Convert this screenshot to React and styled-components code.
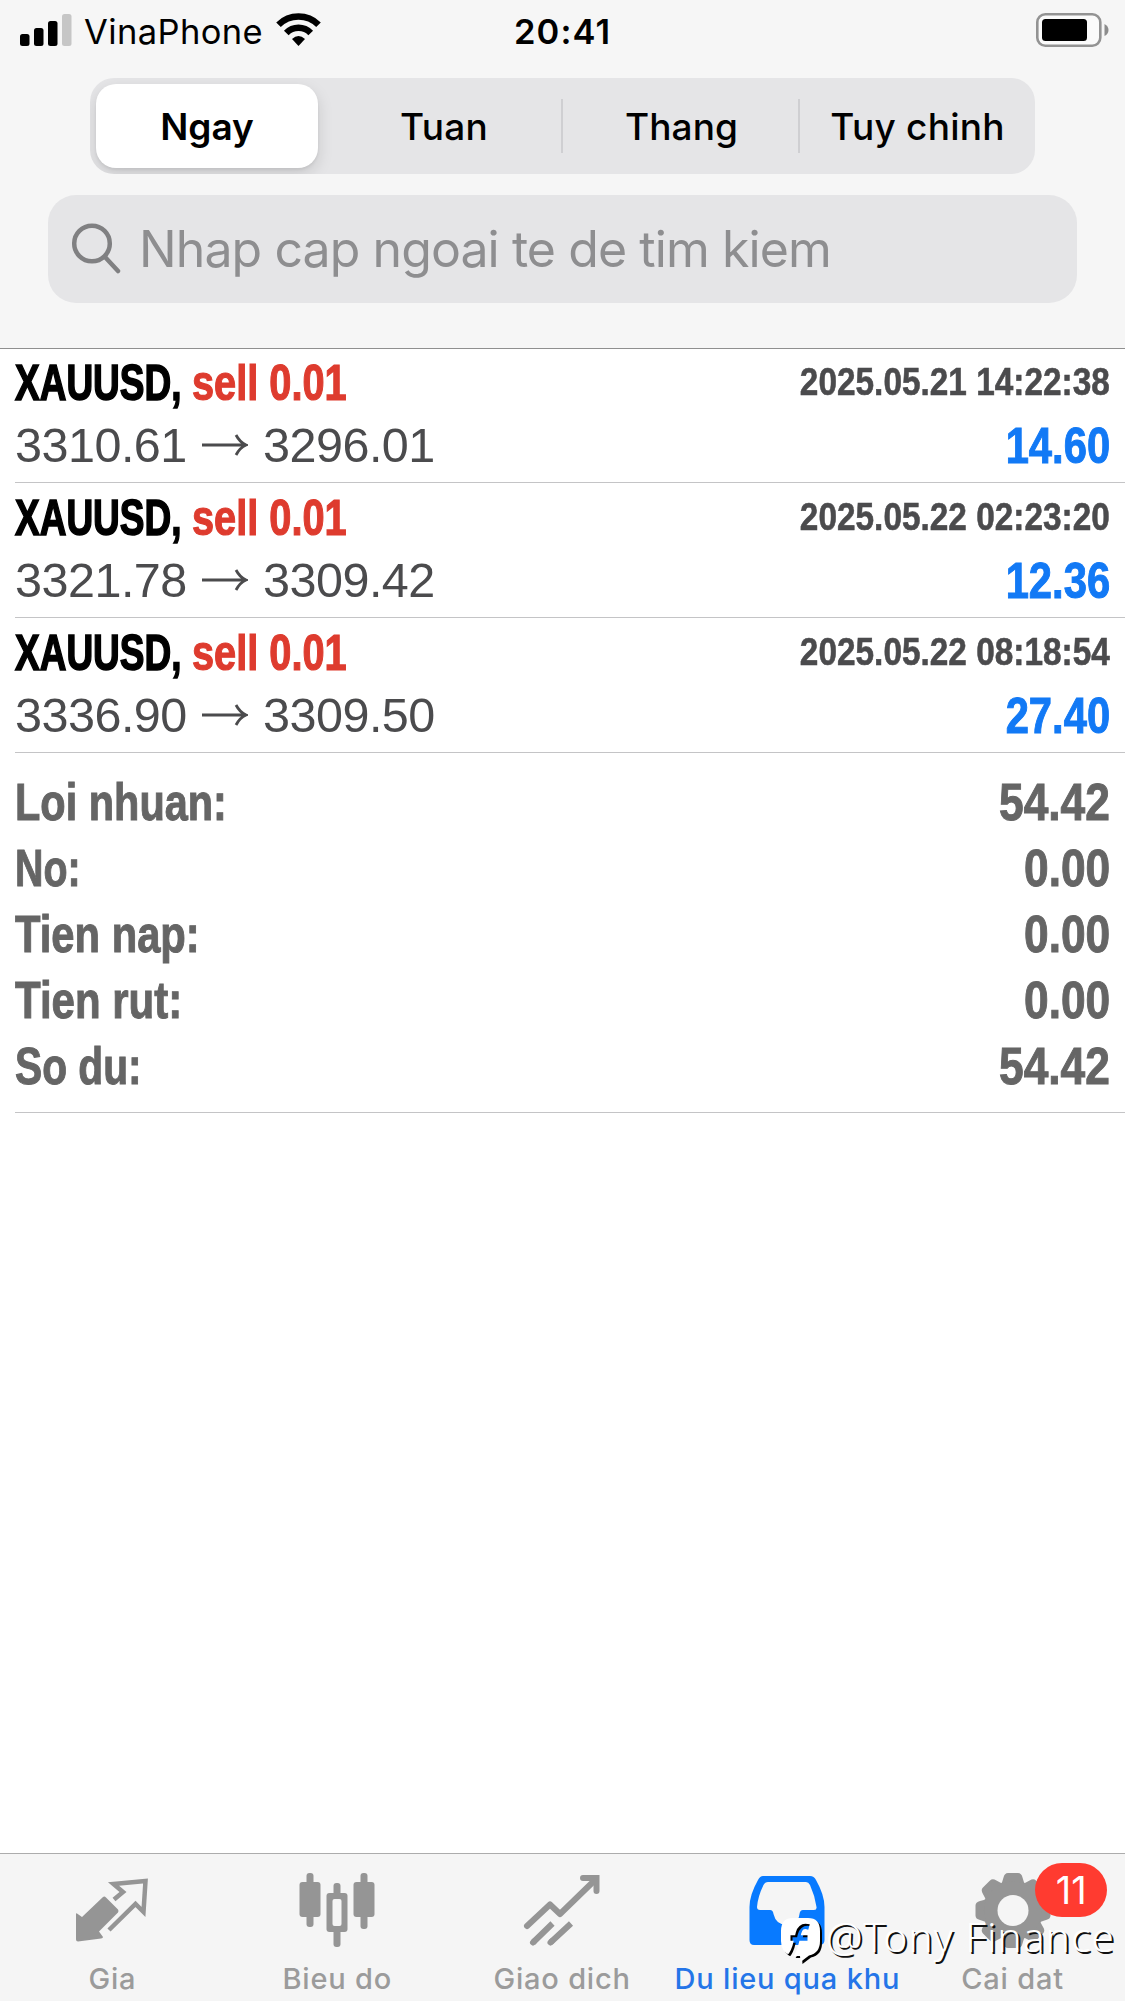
import React from "react";
import styled, { createGlobalStyle } from "styled-components";

const Global = createGlobalStyle`
  * { box-sizing: border-box; }
  body { margin: 0; background: #fff; }
`;

const ui = `"Inter", "Liberation Sans", sans-serif`;
const helv = `"Liberation Sans", Arial, sans-serif`;

const Screen = styled.div`
  width: 1125px;
  height: 2001px;
  display: flex;
  flex-direction: column;
  background: #fff;
  overflow: hidden;
  font-family: ${ui};
  white-space: nowrap;
`;

const Header = styled.header`
  height: 349px;
  flex: none;
  background: #f6f6f6;
  border-bottom: 1px solid #8f8f8f;
  display: flex;
  flex-direction: column;
`;

const StatusBar = styled.div`
  height: 78px;
  padding: 13px 16px 0 20px;
  display: grid;
  grid-template-columns: 494px auto 1fr;
  align-items: start;
`;

const Carrier = styled.div`
  display: flex;
  align-items: flex-start;
`;

const CarrierName = styled.span`
  margin: -2px 11px 0 12px;
  width: 181px;
  font-size: 34.5px;
  line-height: 42px;
  letter-spacing: 0.4px;
`;

const Clock = styled.span`
  margin-top: -2px;
  font-size: 34.5px;
  line-height: 42px;
  font-weight: 600;
  letter-spacing: 1.1px;
`;

const BatterySlot = styled.div`
  display: flex;
  justify-content: flex-end;
`;

const Segmented = styled.div`
  margin: 0 90px;
  height: 96px;
  padding: 6px;
  border-radius: 24px;
  background: #e5e5e7;
  display: grid;
  grid-template-columns: 222px 244px 237px 1fr;
  overflow: hidden;
`;

const Segment = styled.div`
  display: flex;
  align-items: center;
  justify-content: center;
  position: relative;
  font-size: 37px;
  font-weight: ${(p) => (p.$active ? 600 : 500)};
  letter-spacing: ${(p) => p.$spacing || 0}px;
  padding: 0 0 0 ${(p) => p.$shift || 0}px;
  border-radius: 20px;
  background: ${(p) => (p.$active ? "#fff" : "transparent")};
  box-shadow: ${(p) => (p.$active ? "0 6px 16px rgba(0,0,0,.13), 0 2px 3px rgba(0,0,0,.06)" : "none")};

  &::after {
    content: "";
    display: ${(p) => (p.$divider ? "block" : "none")};
    position: absolute;
    right: -1px;
    top: 15px;
    width: 2px;
    height: 54px;
    background: #cfcfd2;
  }
`;

const Search = styled.div`
  margin: 21px 48px 0;
  height: 108px;
  padding-left: 23px;
  border-radius: 28px;
  background: #e5e5e7;
  display: flex;
  align-items: center;
  color: #8e8e90;
`;

const Placeholder = styled.span`
  margin-left: 17px;
  font-size: 50px;
  line-height: 60px;
  letter-spacing: -0.92px;
`;

const Deal = styled.div`
  margin-left: 15px;
  padding-right: 15px;
  height: 135px;
  flex: none;
  border-bottom: 1px solid #c4c4c6;
  font-family: ${helv};
  display: grid;
  grid-template-columns: 1fr auto;
  grid-template-rows: 68px 1fr;
`;

const Deals = styled.section`
  flex: none;
  margin-top: -1px;
`;

const Title = styled.div`
  display: grid;
  grid-template-columns: 177px auto;
  align-items: center;
  padding-top: 2px;
`;

const Condensed = styled.span`
  display: block;
  align-self: start;
  margin-top: ${(p) => p.$top || 0}px;
  transform: scaleX(${(p) => p.$scale});
  transform-origin: ${(p) => (p.$end ? "right" : "left")} center;
  justify-self: ${(p) => (p.$end ? "end" : "start")};
  font-weight: 700;
  font-size: ${(p) => p.$size}px;
  line-height: 60px;
  color: ${(p) => p.$color};
  -webkit-text-stroke: ${(p) => p.$stroke ?? 1}px ${(p) => p.$color};
`;

const Prices = styled.div`
  display: grid;
  grid-template-columns: 187px 61px auto;
  align-items: start;
  font-size: 48.5px;
  line-height: 58px;
  letter-spacing: -0.5px;
  color: #4b4b4d;

  svg { margin-top: 17px; }
`;

const Summary = styled.section`
  margin-left: 15px;
  padding: 16px 15px 0 0;
  height: 360px;
  flex: none;
  border-bottom: 1px solid #c4c4c6;
  font-family: ${helv};
`;

const SummaryRow = styled.div`
  height: 66px;
  padding-top: 3px;
  display: flex;
  justify-content: space-between;
`;

const TabBar = styled.nav`
  position: relative;
  margin-top: auto;
  height: 148px;
  flex: none;
  border-top: 1px solid #acacac;
  background: #f5f5f5;
  display: grid;
  grid-template-columns: repeat(5, 1fr);
`;

const Tab = styled.div`
  position: relative;
  display: flex;
  flex-direction: column;
  align-items: center;
  padding-top: 22px;
  color: ${(p) => (p.$active ? "#2475e8" : "#9b9b9b")};
  font-size: 29px;
  line-height: 36px;
  font-weight: 500;
  letter-spacing: 0.8px;

  svg { display: block; flex: none; margin-bottom: 9px; overflow: visible; }
`;

const Badge = styled.span`
  position: absolute;
  left: 135px;
  top: 9px;
  width: 72px;
  height: 54px;
  border-radius: 27px;
  background: #ff3b30;
  color: #fff;
  font-size: 38px;
  font-weight: 400;
  line-height: 54px;
  letter-spacing: 0;
  text-align: center;
`;

const Watermark = styled.div`
  position: absolute;
  left: 781px;
  top: 58px;
  display: flex;
  color: #fff;
  font-family: "Noto Sans", sans-serif;
  font-weight: 300;
  font-size: 41px;
  line-height: 48px;
  letter-spacing: 0.9px;
  text-shadow: 2px 2px 0 #111;

  svg { margin: 6px 5px 0 0; overflow: visible; filter: drop-shadow(2px 2px 0 #000); }
`;

const Signal = () => (
  <svg width="52" height="34" viewBox="0 0 52 34">
    <rect x="0" y="21" width="9.5" height="12" rx="2.5" />
    <rect x="14" y="15" width="9.5" height="18" rx="2.5" />
    <rect x="28" y="8" width="9.5" height="25" rx="2.5" />
    <rect x="42" y="1" width="9.5" height="32" rx="2.5" fill="#c6c6c6" />
  </svg>
);

const Wifi = () => (
  <svg width="45" height="34" viewBox="0 0 45 34" fill="none" stroke="#000" strokeWidth="6.5">
    <path d="M2.5 11.8 A28.5 28.5 0 0 1 42.5 11.8" />
    <path d="M10.3 19.9 A17 17 0 0 1 34.7 19.9" />
    <path d="M16 26 Q22.500 20 29 26 L22.500 33 Z" fill="#000" stroke="none" />
  </svg>
);

const Battery = () => (
  <svg width="73" height="34" viewBox="0 0 73 34">
    <rect x="1.300" y="1.300" width="63" height="31.400" rx="8" fill="#fbfbfb" stroke="#939393" strokeWidth="2.600" />
    <rect x="6" y="6" width="45" height="22" rx="3.500" />
    <path d="M68.500 11 Q72.500 13 72.500 17 Q72.500 21 68.500 23 Z" fill="#8c8c8c" />
  </svg>
);

const Magnifier = () => (
  <svg width="51" height="52" viewBox="0 0 51 52" fill="none" stroke="#808082" strokeWidth="4.500" strokeLinecap="round">
    <circle cx="21" cy="20.500" r="17.800" />
    <path d="M34 34 L47 48" />
  </svg>
);

const Arrow = () => (
  <svg width="46" height="24" viewBox="0 0 46 24" fill="none" stroke="#4b4b4d" strokeWidth="2.800">
    <path d="M0 12 H44 M34 2 Q38 9.500 44 12 Q38 14.500 34 22" />
  </svg>
);

const QuotesIcon = () => (
  <svg width="74" height="76" viewBox="0 0 74 76">
    <path d="M31 21.500 L43 33.500 Q44 35 43 36.500 L24 55.500 L28 61 Q28 62 26 62.500 L3 65.500 Q1 65.500 1 63.500 L1 38 Q1 37 2 37.500 L7 41 L28 21 Q29.500 20 31 21.500 Z" fill="#959595" />
    <path d="M39 23.500 L48 16 L38.500 8 L70.500 5 L68.500 36 L60.500 28 L34 54" fill="none" stroke="#959595" strokeWidth="4.500" />
  </svg>
);

const CandlesIcon = () => (
  <svg width="76" height="76" viewBox="0 0 76 76" fill="#959595">
    <rect x="7.500" y="-3" width="7" height="54" rx="3" />
    <rect x="0.500" y="6" width="21" height="35" rx="3" />
    <rect x="34.500" y="7" width="7" height="64" rx="3" />
    <rect x="27.500" y="17" width="21" height="39" rx="3" />
    <rect x="33.500" y="23" width="9" height="27" rx="2" fill="#f5f5f5" />
    <rect x="61.500" y="-3" width="7" height="56" rx="3" />
    <rect x="54.500" y="6" width="21" height="35" rx="3" />
  </svg>
);

const TradeIcon = () => (
  <svg width="76" height="76" viewBox="0 0 76 76" fill="none" stroke="#959595" strokeWidth="6">
    <path d="M3 50 L26 28.500 L36 38 L71 4" strokeLinejoin="round" strokeLinecap="round" />
    <path d="M59 2 H72.500 V15" strokeLinecap="round" />
    <path d="M9 66.500 L28.500 47.500 M26.500 66.500 L47 47.500" />
    <path d="M9 66.500 L10 65.500 M26.500 66.500 L27.500 65.500" strokeLinecap="round" />
  </svg>
);

const HistoryIcon = () => (
  <svg width="76" height="76" viewBox="0 0 76 76">
    <path
      fillRule="evenodd"
      fill="#087aff"
      d="M14 0 H61 Q65 0 67 4 Q75.500 19 75.500 31 V64 Q75.500 69 70.500 69 H5 Q0.500 69 0.500 64 V31 Q0.500 19 9 4 Q11 0 14 0 Z M19 6 Q16 6 14.500 9 Q9 20 8 31 Q8 34 11 34 H21 Q24 34 24.500 38 Q27 49 38 49 Q49 49 50.500 38 Q51 34 54 34 H65 Q68 34 67.500 31 Q66 20 61 9 Q59.500 6 57 6 Z"
    />
  </svg>
);

const GearIcon = () => (
  <svg width="76" height="76" viewBox="-38 -34.5 76 76" fill="#959595">
    {[0, 45, 90, 135, 180, 225, 270, 315].map((angle) => (
      <path
        key={angle}
        transform={`rotate(${angle})`}
        d="M-13 -25 Q-10.500 -28 -9.500 -33 Q-8.500 -37.500 -5 -37.500 H5 Q8.500 -37.500 9.500 -33 Q10.500 -28 13 -25 Z"
      />
    ))}
    <circle r="29" />
    <circle r="15.500" fill="#f5f5f5" />
  </svg>
);

const WatermarkLogo = () => (
  <svg width="40" height="46" viewBox="0 0 40 46">
    <mask id="logo-cut" maskUnits="userSpaceOnUse" x="0" y="0" width="40" height="46">
      <rect width="40" height="46" fill="#fff" />
      <path d="M28 9 C21 7 19 10 17.500 15 L15.500 23 C14 30 12 36 7.500 40 M9.500 20 H26.500" stroke="#000" strokeWidth="5.500" fill="none" />
    </mask>
    <path
      mask="url(#logo-cut)"
      d="M12 0 H27 Q39 0 39 13 V23 Q39 35 28 37.500 L19.500 44 L19 38 H10 L8.500 37 Q0 33 0 23 V13 Q0 0 12 0 Z"
      fill="#fff"
    />
  </svg>
);

const deals = [
  { from: "3310.61", to: "3296.01", time: "2025.05.21 14:22:38", profit: "14.60" },
  { from: "3321.78", to: "3309.42", time: "2025.05.22 02:23:20", profit: "12.36" },
  { from: "3336.90", to: "3309.50", time: "2025.05.22 08:18:54", profit: "27.40" },
];

const totals = [
  { label: "Loi nhuan:", value: "54.42", scale: 0.79 },
  { label: "No:", value: "0.00", scale: 0.75 },
  { label: "Tien nap:", value: "0.00", scale: 0.795 },
  { label: "Tien rut:", value: "0.00", scale: 0.8 },
  { label: "So du:", value: "54.42", scale: 0.775 },
];

export default function App() {
  return (
    <Screen>
      <Global />
      <Header>
        <StatusBar>
          <Carrier>
            <Signal />
            <CarrierName>VinaPhone</CarrierName>
            <Wifi />
          </Carrier>
          <Clock>20:41</Clock>
          <BatterySlot><Battery /></BatterySlot>
        </StatusBar>
        <Segmented>
          <Segment $active>Ngay</Segment>
          <Segment $divider $shift={8} $spacing={0.2}>Tuan</Segment>
          <Segment $divider $shift={2} $spacing={0.1}>Thang</Segment>
          <Segment $shift={7} $spacing={0.25}>Tuy chinh</Segment>
        </Segmented>
        <Search>
          <Magnifier />
          <Placeholder>Nhap cap ngoai te de tim kiem</Placeholder>
        </Search>
      </Header>
      <Deals>
        {deals.map((d) => (
          <Deal key={d.time}>
            <Title>
              <Condensed $top={3} $size={50} $scale={0.74} $stroke={1.6} $color="#000">XAUUSD,</Condensed>
              <Condensed $top={3} $size={50} $scale={0.795} $stroke={1.2} $color="#de3b2e">sell 0.01</Condensed>
            </Title>
            <Condensed $end $top={3} $size={39.5} $scale={0.845} $color="#4b4b4d" $stroke={0.6}>{d.time}</Condensed>
            <Prices>
              <span>{d.from}</span>
              <Arrow />
              <span>{d.to}</span>
            </Prices>
            <Condensed $end $size={50} $scale={0.835} $color="#1279f5">{d.profit}</Condensed>
          </Deal>
        ))}
      </Deals>
      <Summary>
        {totals.map((t) => (
          <SummaryRow key={t.label}>
            <Condensed $size={52.5} $scale={t.scale} $color="#656565">{t.label}</Condensed>
            <Condensed $end $size={51.5} $scale={0.86} $color="#656565">{t.value}</Condensed>
          </SummaryRow>
        ))}
      </Summary>
      <TabBar>
        <Tab><QuotesIcon />Gia</Tab>
        <Tab><CandlesIcon />Bieu do</Tab>
        <Tab><TradeIcon />Giao dich</Tab>
        <Tab $active><HistoryIcon />Du lieu qua khu</Tab>
        <Tab><GearIcon />Cai dat<Badge>11</Badge></Tab>
        <Watermark><WatermarkLogo />@Tony Finance</Watermark>
      </TabBar>
    </Screen>
  );
}
